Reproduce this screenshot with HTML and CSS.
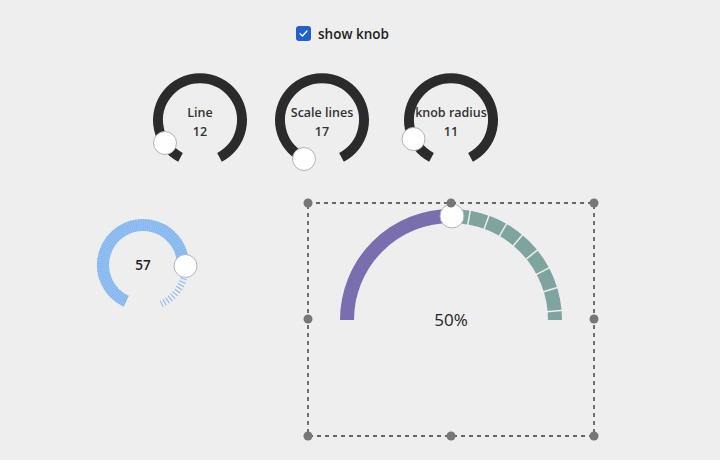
FILE: index.html
```html
<!DOCTYPE html>
<html>
<head>
<meta charset="utf-8">
<link rel="stylesheet" href="styles.css">
</head>
<body>
<main class="page">
  <label class="toggle">
    <span class="box"><svg width="15" height="15" viewBox="0 0 15 15"><path d="M4 7.6 L6.4 10 L11 5" fill="none" stroke="#fff" stroke-width="1.3" stroke-linecap="round" stroke-linejoin="round"/></svg></span>
    <span class="toggle-text">show knob</span>
  </label>

  <div class="knobs">
    <svg class="knob k1" width="100" height="100" viewBox="0 0 100 100">
      <path d="M30.5 87.4 A42 42 0 1 1 69.5 87.4" fill="none" stroke="#2b2b2b" stroke-width="10"/>
      <text x="50" y="47" class="klabel">Line</text>
      <text x="50" y="66" class="klabel">12</text>
      <circle cx="15" cy="73" r="11.5" class="handle"/>
    </svg>
    <svg class="knob k2" width="100" height="100" viewBox="0 0 100 100">
      <path d="M30.5 87.4 A42 42 0 1 1 69.5 87.4" fill="none" stroke="#2b2b2b" stroke-width="10"/>
      <text x="50" y="47" class="klabel">Scale lines</text>
      <text x="50" y="66" class="klabel">17</text>
      <circle cx="32" cy="89" r="11.5" class="handle"/>
    </svg>
    <svg class="knob k3" width="100" height="100" viewBox="0 0 100 100">
      <path d="M30.5 87.4 A42 42 0 1 1 69.5 87.4" fill="none" stroke="#2b2b2b" stroke-width="10"/>
      <text x="50" y="47" class="klabel">knob radius</text>
      <text x="50" y="66" class="klabel">11</text>
      <circle cx="12.5" cy="69" r="11.5" class="handle"/>
    </svg>
  </div>

  <div class="gauges">
    <svg class="blue" width="120" height="120" viewBox="0 0 120 120">
      <path d="M43.1 96.25 A40 40 0 1 1 100 60" fill="none" stroke="#94c0f1" stroke-width="12"/>
      <path d="M43.1 96.25 A40 40 0 1 1 100 60" fill="none" stroke="#7fb2ec" stroke-width="12" stroke-dasharray="0.7 1.6"/>
      <path d="M103 60 A43 43 0 0 1 78.2 98.97" fill="none" stroke="#8dbcf0" stroke-width="7" stroke-dasharray="1.1 2.3"/>
      <text x="60" y="65" class="blabel">57</text>
      <circle cx="102.5" cy="61" r="11.5" class="handle"/>
    </svg>

    <svg class="big" width="302" height="250" viewBox="0 0 302 250">
      <rect x="8" y="8" width="286" height="233" fill="none" stroke="#3a3a3a" stroke-width="1.4" stroke-dasharray="4 4"/>
      <path d="M47 125 A104 104 0 0 1 151 21" fill="none" stroke="#7a6eae" stroke-width="14"/>
      <path d="M151 21 A104 104 0 0 1 255 125" fill="none" stroke="#7fa39f" stroke-width="14"/>
      <g stroke="#eeeeee" stroke-width="1.5" transform="translate(151 125)">
        <line x1="0" y1="-96" x2="0" y2="-113" transform="rotate(10)"/>
        <line x1="0" y1="-96" x2="0" y2="-113" transform="rotate(20)"/>
        <line x1="0" y1="-96" x2="0" y2="-113" transform="rotate(30)"/>
        <line x1="0" y1="-96" x2="0" y2="-113" transform="rotate(40)"/>
        <line x1="0" y1="-96" x2="0" y2="-113" transform="rotate(51)"/>
        <line x1="0" y1="-96" x2="0" y2="-113" transform="rotate(62)"/>
        <line x1="0" y1="-96" x2="0" y2="-113" transform="rotate(73)"/>
        <line x1="0" y1="-96" x2="0" y2="-113" transform="rotate(85)"/>
      </g>
      <circle cx="152" cy="21" r="12" class="handle"/>
      <text x="151" y="131" class="pct">50%</text>
      <g fill="#777777">
        <circle cx="8" cy="8" r="4.5"/>
        <circle cx="151" cy="8" r="4.5"/>
        <circle cx="294" cy="8" r="4.5"/>
        <circle cx="8" cy="124" r="4.5"/>
        <circle cx="294" cy="124" r="4.5"/>
        <circle cx="8" cy="241" r="4.5"/>
        <circle cx="151" cy="241" r="4.5"/>
        <circle cx="294" cy="241" r="4.5"/>
      </g>
    </svg>
  </div>
</main>
</body>
</html>
```

FILE: styles.css
```css
html, body {
  margin: 0;
  padding: 0;
  background: #eeeeee;
  font-family: "Open Sans", "Noto Sans", "Liberation Sans", sans-serif;
  color: #222;
}

.page {
  width: 720px;
  height: 460px;
  display: flex;
  flex-direction: column;
  overflow: hidden;
}

.toggle {
  display: flex;
  align-items: center;
  gap: 7px;
  margin: 25px 0 0 296px;
  height: 17px;
}

.box {
  width: 15px;
  height: 15px;
  border-radius: 3px;
  background: #2160c4;
  display: flex;
}

.toggle-text {
  font-size: 13.5px;
  font-weight: 600;
  color: #1e1e1e;
}

.knobs {
  display: flex;
  margin: 28px 0 0 150px;
  gap: 22px;
}

.knobs .k3 {
  margin-left: 7px;
}

.knob {
  overflow: visible;
  display: block;
}

.klabel {
  font-family: "Open Sans", "Noto Sans", sans-serif;
  font-size: 12.5px;
  font-weight: 600;
  fill: #333;
  text-anchor: middle;
}

.handle {
  fill: #ffffff;
  stroke: #aab3c0;
  stroke-width: 1;
}

.gauges {
  display: flex;
  align-items: flex-start;
  margin-top: 25px;
  padding-left: 83px;
}

.blue {
  display: block;
  margin-top: 10px;
  overflow: visible;
}

.blabel {
  font-size: 13.5px;
  font-weight: 600;
  fill: #222;
  text-anchor: middle;
}

.big {
  display: block;
  margin-left: 97px;
  overflow: visible;
}

.pct {
  font-size: 17px;
  font-weight: 500;
  fill: #222;
  text-anchor: middle;
}
```
